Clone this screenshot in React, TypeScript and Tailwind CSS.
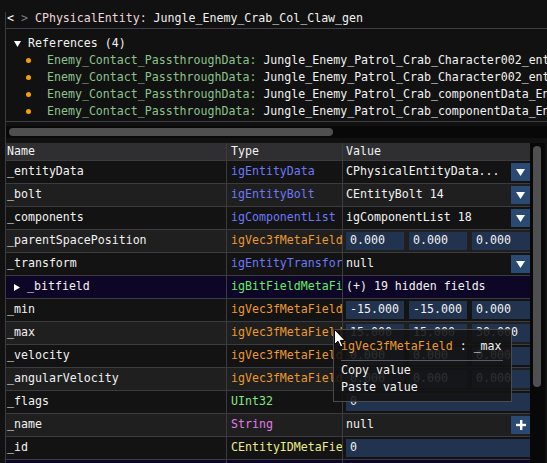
import React from "react";

type Field = {
  name: string;
  type: string;
  tc: string;
  kind: "drop" | "vec" | "input" | "plus" | "text";
  value?: string;
  vals?: string[];
  bg: string;
  expand?: boolean;
};

const DARK = "bg-[#131313]";
const LIGHT = "bg-[#1f1f1f]";
const PURPLE = "bg-[#0e0626]";

const BLUE = "text-[#6e78f8]";
const ORANGE = "text-[#eb9a2e]";

const fields: Field[] = [
  { name: "_entityData", type: "igEntityData", tc: BLUE, kind: "drop", value: "CPhysicalEntityData...", bg: DARK },
  { name: "_bolt", type: "igEntityBolt", tc: BLUE, kind: "drop", value: "CEntityBolt 14", bg: LIGHT },
  { name: "_components", type: "igComponentList", tc: BLUE, kind: "drop", value: "igComponentList 18", bg: DARK },
  { name: "_parentSpacePosition", type: "igVec3fMetaField", tc: ORANGE, kind: "vec", vals: ["0.000", "0.000", "0.000"], bg: LIGHT },
  { name: "_transform", type: "igEntityTransform", tc: BLUE, kind: "drop", value: "null", bg: DARK },
  { name: "_bitfield", type: "igBitFieldMetaField", tc: "text-[#62ee62]", kind: "text", value: "(+) 19 hidden fields", bg: PURPLE, expand: true },
  { name: "_min", type: "igVec3fMetaField", tc: ORANGE, kind: "vec", vals: ["-15.000", "-15.000", "0.000"], bg: DARK },
  { name: "_max", type: "igVec3fMetaField", tc: ORANGE, kind: "vec", vals: ["15.000", "15.000", "30.000"], bg: LIGHT },
  { name: "_velocity", type: "igVec3fMetaField", tc: ORANGE, kind: "vec", vals: ["0.000", "0.000", "0.000"], bg: DARK },
  { name: "_angularVelocity", type: "igVec3fMetaField", tc: ORANGE, kind: "vec", vals: ["0.000", "0.000", "0.000"], bg: LIGHT },
  { name: "_flags", type: "UInt32", tc: "text-[#86e486]", kind: "input", value: "0", bg: DARK },
  { name: "_name", type: "String", tc: "text-[#e27ae8]", kind: "plus", value: "null", bg: LIGHT },
  { name: "_id", type: "CEntityIDMetaField", tc: "text-[#ecec8c]", kind: "input", value: "0", bg: DARK },
  { name: "", type: "", tc: "", kind: "text", value: "", bg: PURPLE },
];

const DropButton = () => (
  <div className="w-[19px] h-[18px] bg-[#2a4a74] flex items-center justify-center shrink-0">
    <svg width="9" height="7" viewBox="0 0 9 7">
      <polygon points="0,0 9,0 4.5,7" fill="#ffffff" />
    </svg>
  </div>
);

const PlusButton = () => (
  <div className="w-[19px] h-[18px] bg-[#2a4a74] flex items-center justify-center shrink-0">
    <svg width="10" height="10" viewBox="0 0 10 10">
      <rect x="4" y="0" width="2.4" height="10" fill="#ffffff" />
      <rect x="0" y="3.8" width="10" height="2.4" fill="#ffffff" />
    </svg>
  </div>
);

const ValueCell = ({ f }: { f: Field }) => {
  if (f.kind === "drop")
    return (
      <>
        <span className="flex-1 whitespace-pre overflow-hidden">{f.value}</span>
        <DropButton />
      </>
    );
  if (f.kind === "plus")
    return (
      <>
        <span className="flex-1">{f.value}</span>
        <PlusButton />
      </>
    );
  if (f.kind === "vec")
    return (
      <div className="flex-1 flex gap-[5px]">
        {f.vals!.map((v, i) => (
          <div key={i} className="flex-1 h-[18px] bg-[#223350] pl-[4px] flex items-center whitespace-nowrap">
            {v}
          </div>
        ))}
      </div>
    );
  if (f.kind === "input")
    return <div className="flex-1 h-[18px] bg-[#223350] pl-[4px] flex items-center">{f.value}</div>;
  return <span className="whitespace-pre">{f.value}</span>;
};

export default function App() {
  return (
    <div className="relative w-[547px] h-[463px] overflow-hidden bg-[#111111] text-[#f2f2f2] text-[11.6px] leading-none font-['DejaVu_Sans_Mono',monospace]">
      <div className="h-[12px]" />
      <div className="ml-[5px] h-[451px] border-l border-[#3b3b40] flex flex-col">
        {/* title */}
        <div className="h-[17px] shrink-0 border-b border-[#3d3d45] pl-[1px] whitespace-pre leading-[12px]">
          <span className="text-white">{"< "}</span>
          <span className="text-[#7a7a80]">{"> "}</span>
          <span className="text-[#f0d6de]">{"CPhysicalEntity: "}</span>
          <span>Jungle_Enemy_Crab_Col_Claw_gen</span>
        </div>

        {/* references */}
        <div className="shrink-0 border-b border-[#3d3d45] pt-[6px] pb-[1px] leading-[17px] whitespace-pre">
          <div className="h-[17px] flex items-center pl-[8px]">
            <svg width="7" height="6" viewBox="0 0 7 6" className="mr-[7px]">
              <polygon points="0,0 7,0 3.5,6" fill="#ffffff" />
            </svg>
            <span>References (4)</span>
          </div>
          {[
            "Jungle_Enemy_Patrol_Crab_Character002_entity",
            "Jungle_Enemy_Patrol_Crab_Character002_entity",
            "Jungle_Enemy_Patrol_Crab_componentData_Enemy",
            "Jungle_Enemy_Patrol_Crab_componentData_Enemy",
          ].map((r, i) => (
            <div key={i} className="h-[17px] flex items-center pl-[20px]">
              <span className="w-[5px] h-[5px] rounded-full bg-[#f5a000] mr-[16px] shrink-0" />
              <span className="text-[#8dc28d] whitespace-pre">{"Enemy_Contact_PassthroughData: "}</span>
              <span>{r}</span>
            </div>
          ))}
        </div>

        {/* horizontal scrollbar */}
        <div className="shrink-0 pt-[4px] pb-[5px]">
          <div className="h-[12px] bg-[#080808] pt-[2px] pl-[3px]">
            <div className="w-[324px] h-[8px] rounded-full bg-[#4f4f4f]" />
          </div>
        </div>

        {/* table + vertical scrollbar */}
        <div className="flex flex-1 min-h-0">
          <div className="w-[524px] shrink-0 flex flex-col overflow-hidden">
            <div className="h-[18px] shrink-0 flex bg-[#2f2f31] border-b border-[#3b3b40]">
              <div className="w-[221px] shrink-0 border-r border-[#3b3b40] pl-[1px] flex items-center">Name</div>
              <div className="w-[116px] shrink-0 border-r border-[#3b3b40] pl-[4px] flex items-center">Type</div>
              <div className="flex-1 pl-[3px] flex items-center">Value</div>
            </div>
            {fields.map((f, i) => (
              <div key={i} className={`h-[23px] shrink-0 flex border-b border-[#3b3b40] ${f.bg}`}>
                <div className="w-[221px] shrink-0 border-r border-[#3b3b40] pl-[1px] flex items-center whitespace-nowrap">
                  {f.expand && (
                    <svg width="6" height="7" viewBox="0 0 6 7" className="ml-[7px] mr-[7px]">
                      <polygon points="0,0 6,3.5 0,7" fill="#ffffff" />
                    </svg>
                  )}
                  {f.name}
                </div>
                <div className={`w-[116px] shrink-0 border-r border-[#3b3b40] pl-[4px] flex items-center overflow-hidden whitespace-nowrap ${f.tc}`}>
                  {f.type}
                </div>
                <div className="flex-1 pl-[3px] flex items-center">
                  <ValueCell f={f} />
                </div>
              </div>
            ))}
          </div>
          <div className="w-[15px] shrink-0 bg-[#080808] pt-[3px] pl-[3px]">
            <div className="w-[8px] h-[241px] rounded-full bg-[#4f4f4f]" />
          </div>
        </div>
      </div>

      {/* context popup */}
      <div className="absolute left-[333px] top-[329px] w-[179px] h-[73px] border border-[#4a4a50] bg-[rgba(18,18,18,0.88)] px-[7px] pt-[8px] whitespace-pre">
        <div className="h-[17px] flex items-center">
          <span className="text-[#eb9a2e]">igVec3fMetaField</span>
          <span className="whitespace-pre">{" : _max"}</span>
        </div>
        <div className="mt-[5px] h-px w-[162px] bg-[#5c5c66]" />
        <div className="mt-[1px] h-[17px] flex items-center">Copy value</div>
        <div className="h-[17px] flex items-center">Paste value</div>
      </div>

      {/* mouse cursor */}
      <svg className="absolute left-[334px] top-[329px]" width="13" height="19" viewBox="0 0 13 19">
        <path d="M0.5,0.5 L0.5,15.5 L4,12.2 L6.6,18 L8.8,17 L6.3,11.4 L11,11.4 Z" fill="#ffffff" stroke="#000000" strokeWidth="1" />
      </svg>
    </div>
  );
}
